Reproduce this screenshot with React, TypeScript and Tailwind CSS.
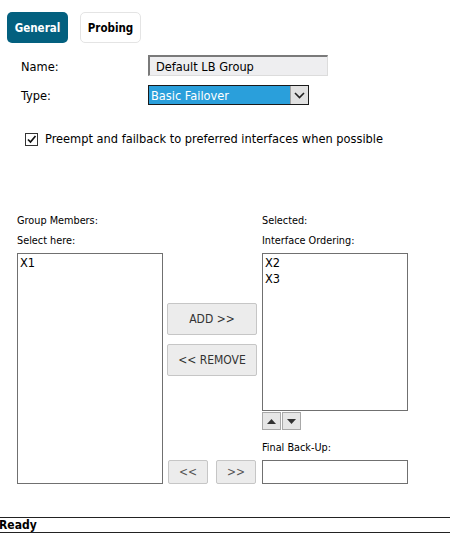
import React from "react";

const font = { fontFamily: "Tahoma, 'DejaVu Sans Condensed', 'Liberation Sans', sans-serif" };

export default function App() {
  return (
    <div className="relative w-[450px] h-[544px] bg-white text-black overflow-hidden" style={font}>
      <div className="flex gap-3 pl-[7px] pt-3">
        <div className="w-[61px] h-[31px] pt-[3px] rounded-[5px] bg-[#03607f] text-white text-[11.5px] font-bold flex items-center justify-center">General</div>
        <div className="w-[61px] h-[31px] pt-[3px] rounded-[5px] bg-white border border-[#e4e4e4] text-[11.5px] font-bold flex items-center justify-center">Probing</div>
      </div>

      <div className="flex items-center mt-[12px] h-[21px]">
        <div className="w-[148px] pl-[21px] text-[12.7px] pt-[3px]">Name:</div>
        <div className="w-[180px] h-[21px] bg-[#eeeef0] border-t-2 border-l-2 border-t-[#7a7a7a] border-l-[#7a7a7a] border-r border-b border-r-[#dcdcdc] border-b-[#dcdcdc] text-[12.7px] pl-[6px] leading-[20px]">Default LB Group</div>
      </div>

      <div className="flex items-center mt-[9px] h-[20px]">
        <div className="w-[148px] pl-[21px] text-[12.7px] pt-[2px]">Type:</div>
        <div className="w-[161px] h-[20px] border border-[#1a1a1a] flex">
          <div className="flex-1 bg-[#2a9fdb] text-white text-[12.7px] pl-[2px] leading-[19px]">Basic Failover</div>
          <div className="w-[18px] bg-[#e1e1e1] border-l border-[#a0a0a0] flex items-center justify-center">
            <svg width="11" height="7" viewBox="0 0 11 7"><path d="M1 1 L5.5 5.5 L10 1" stroke="#222" strokeWidth="1.6" fill="none" /></svg>
          </div>
        </div>
      </div>

      <div className="flex items-center mt-[27px] pl-[25px] h-[14px]">
        <div className="w-[13px] h-[13px] border border-[#333] bg-white flex items-center justify-center">
          <svg width="11" height="11" viewBox="0 0 11 11"><path d="M2 5.5 L4.5 8 L9.5 2" stroke="#111" strokeWidth="1.7" fill="none" /></svg>
        </div>
        <span className="ml-[7px] text-[12.7px]">Preempt and failback to preferred interfaces when possible</span>
      </div>

      <div className="flex mt-[68px] pl-[17px] text-[10.8px] leading-[14px]">
        <div className="w-[245px] flex flex-col gap-[6px]">
          <div>Group Members:</div>
          <div>Select here:</div>
        </div>
        <div className="flex flex-col gap-[6px]">
          <div>Selected:</div>
          <div>Interface Ordering:</div>
        </div>
      </div>

      <div className="flex pl-[17px] mt-[5px]">
        <div className="w-[146px] h-[231px] border border-[#707070] text-[12.7px] pl-[2px] pt-[1px] leading-[16px]">X1</div>
        <div className="w-[99px] h-[231px] flex flex-col pl-[4px]">
          <div className="mt-[50px] w-[90px] h-[32px] bg-[#ececec] border border-[#c6c6c6] rounded-[2px] text-[12px] text-[#333] flex items-center justify-center">ADD &gt;&gt;</div>
          <div className="mt-[9px] w-[90px] h-[32px] bg-[#ececec] border border-[#c6c6c6] rounded-[2px] text-[12px] text-[#333] flex items-center justify-center">&lt;&lt; REMOVE</div>
          <div className="mt-auto flex gap-[8px] pl-[1px]">
            <div className="w-[40px] h-[24px] bg-[#ececec] border border-[#c6c6c6] rounded-[2px] text-[12px] text-[#555] flex items-center justify-center">&lt;&lt;</div>
            <div className="w-[40px] h-[24px] bg-[#ececec] border border-[#c6c6c6] rounded-[2px] text-[12px] text-[#555] flex items-center justify-center">&gt;&gt;</div>
          </div>
        </div>
        <div className="w-[146px] h-[231px] flex flex-col">
          <div className="h-[158px] border border-[#707070] text-[12.7px] pl-[2px] pt-[1px] leading-[16px]">
            <div>X2</div>
            <div>X3</div>
          </div>
          <div className="flex gap-[1px] mt-[1px]">
            <div className="w-[19px] h-[18px] bg-[#e6e6e6] border border-[#a8a8a8] flex items-center justify-center">
              <svg width="9" height="5" viewBox="0 0 9 5"><path d="M0 5 L4.5 0 L9 5 Z" fill="#333" /></svg>
            </div>
            <div className="w-[19px] h-[18px] bg-[#e6e6e6] border border-[#a8a8a8] flex items-center justify-center">
              <svg width="9" height="5" viewBox="0 0 9 5"><path d="M0 0 L4.5 5 L9 0 Z" fill="#333" /></svg>
            </div>
          </div>
          <div className="mt-[10px] text-[10.8px]">Final Back-Up:</div>
          <div className="mt-auto h-[24px] border border-[#707070]"></div>
        </div>
      </div>

      <div className="absolute left-0 right-0 top-[517px] h-[16px] border-t border-b border-[#222] text-[12px] font-bold leading-[14px] -ml-[1px] pl-0">Ready</div>
    </div>
  );
}
